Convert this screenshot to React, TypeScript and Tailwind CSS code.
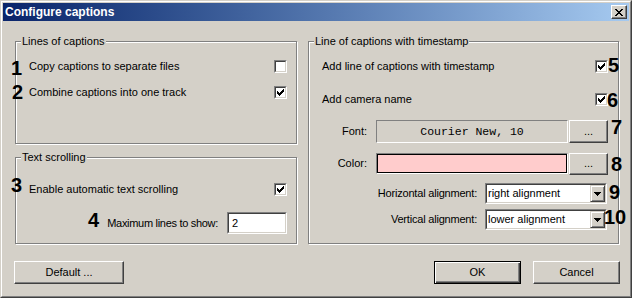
import React from "react";

function CheckMark() {
  return (
    <svg width="7" height="7" viewBox="0 0 7 7" shapeRendering="crispEdges">
      <rect x="6" y="0" width="1" height="1" fill="#000" />
      <rect x="5" y="1" width="2" height="1" fill="#000" />
      <rect x="0" y="2" width="1" height="1" fill="#000" />
      <rect x="4" y="2" width="3" height="1" fill="#000" />
      <rect x="0" y="3" width="2" height="1" fill="#000" />
      <rect x="3" y="3" width="3" height="1" fill="#000" />
      <rect x="0" y="4" width="5" height="1" fill="#000" />
      <rect x="1" y="5" width="3" height="1" fill="#000" />
      <rect x="2" y="6" width="1" height="1" fill="#000" />
    </svg>
  );
}

function Check({ checked }: { checked?: boolean }) {
  return (
    <div className="w-[13px] h-[13px] shrink-0 border border-t-[#808080] border-l-[#808080] border-r-white border-b-white">
      <div className="w-full h-full border border-t-[#404040] border-l-[#404040] border-r-[#D4D0C8] border-b-[#D4D0C8] bg-white flex items-center justify-center">
        {checked && <CheckMark />}
      </div>
    </div>
  );
}

function Group({
  title,
  className,
  children,
}: {
  title: string;
  className: string;
  children?: React.ReactNode;
}) {
  return (
    <div className={className}>
      <span className="absolute -top-[7px] left-[5px] px-[1px] bg-[#D4D0C8] leading-[13px] whitespace-nowrap">
        {title}
      </span>
      {children}
    </div>
  );
}

function Arrow() {
  return (
    <svg width="7" height="4" viewBox="0 0 7 4" shapeRendering="crispEdges">
      <rect x="0" y="0" width="7" height="1" fill="#000" />
      <rect x="1" y="1" width="5" height="1" fill="#000" />
      <rect x="2" y="2" width="3" height="1" fill="#000" />
      <rect x="3" y="3" width="1" height="1" fill="#000" />
    </svg>
  );
}

function Select({ value }: { value: string }) {
  return (
    <div className="w-[122px] h-[21px] mr-[1px] border border-t-[#808080] border-l-[#808080] border-r-white border-b-white">
      <div className="w-full h-full flex border border-t-[#404040] border-l-[#404040] border-r-[#D4D0C8] border-b-[#D4D0C8] bg-white">
        <div className="flex-1 flex items-center pl-[1px] whitespace-nowrap">{value}</div>
        <div className="w-[15px] h-full flex items-center justify-center bg-[#D4D0C8] border border-t-[#D4D0C8] border-l-[#D4D0C8] border-r-[#404040] border-b-[#404040] shadow-[inset_1px_1px_0_#fff,inset_-1px_-1px_0_#808080]">
          <Arrow />
        </div>
      </div>
    </div>
  );
}

function Num({ n, className }: { n: string; className: string }) {
  return (
    <span
      className={
        "absolute font-['Liberation_Sans',Arial,sans-serif] font-bold text-[20px] leading-[20px] text-black " +
        className
      }
    >
      {n}
    </span>
  );
}

export default function App() {
  return (
    <div className="relative w-[632px] h-[298px] font-['Liberation_Sans',Arial,sans-serif] text-[11px] text-black select-none">
      <div className="w-full h-full border border-t-[#D4D0C8] border-l-[#D4D0C8] border-r-[#404040] border-b-[#404040] bg-[#D4D0C8]">
        <div className="w-full h-full border border-t-white border-l-white border-r-[#808080] border-b-[#808080] p-[1px] flex flex-col">
          {/* Title bar */}
          <div className="h-[18px] flex items-center justify-between bg-linear-to-r from-[#0A246A] to-[#A6CAF0] pl-[2px] pr-[2px]">
            <span className="text-white font-bold text-[12px] leading-[18px]">Configure captions</span>
            <div className="w-[16px] h-[14px] bg-[#D4D0C8] flex items-center justify-center border border-t-white border-l-white border-r-[#404040] border-b-[#404040] shadow-[inset_-1px_-1px_0_#808080]">
              <svg width="8" height="7" viewBox="0 0 8 7" shapeRendering="crispEdges">
                <rect x="0" y="0" width="2" height="1" fill="#000" />
                <rect x="6" y="0" width="2" height="1" fill="#000" />
                <rect x="1" y="1" width="2" height="1" fill="#000" />
                <rect x="5" y="1" width="2" height="1" fill="#000" />
                <rect x="2" y="2" width="4" height="1" fill="#000" />
                <rect x="3" y="3" width="2" height="1" fill="#000" />
                <rect x="2" y="4" width="4" height="1" fill="#000" />
                <rect x="1" y="5" width="2" height="1" fill="#000" />
                <rect x="5" y="5" width="2" height="1" fill="#000" />
                <rect x="0" y="6" width="2" height="1" fill="#000" />
                <rect x="6" y="6" width="2" height="1" fill="#000" />
              </svg>
            </div>
          </div>

          {/* Groups */}
          <div className="flex mt-[20px] ml-[12px]">
            <div className="flex flex-col w-[282px] gap-[13px]">
              <Group
                title="Lines of captions"
                className="relative h-[103px] border border-[#808080] shadow-[1px_1px_0_#fff,inset_1px_1px_0_#fff] pt-[18px] pl-[13px] pr-[9px] flex flex-col gap-[13px]"
              >
                <div className="h-[13px] flex items-center justify-between">
                  <span>Copy captions to separate files</span>
                  <Check />
                </div>
                <div className="h-[13px] flex items-center justify-between">
                  <span>Combine captions into one track</span>
                  <Check checked />
                </div>
              </Group>
              <Group
                title="Text scrolling"
                className="relative h-[87px] border border-[#808080] shadow-[1px_1px_0_#fff,inset_1px_1px_0_#fff] pt-[25px] pl-[13px] pr-[9px] flex flex-col"
              >
                <div className="h-[13px] flex items-center justify-between">
                  <span>Enable automatic text scrolling</span>
                  <Check checked />
                </div>
                <div className="mt-[16px] h-[22px] flex items-center justify-end">
                  <span className="tracking-[-0.3px]">Maximum lines to show:</span>
                  <div className="ml-[9px] w-[60px] h-[22px] border border-t-[#808080] border-l-[#808080] border-r-white border-b-white">
                    <div className="w-full h-full border border-t-[#404040] border-l-[#404040] border-r-[#D4D0C8] border-b-[#D4D0C8] bg-white flex items-center pl-[3px]">
                      2
                    </div>
                  </div>
                </div>
              </Group>
            </div>

            <Group
              title="Line of captions with timestamp"
              className="relative ml-[11px] w-[311px] h-[203px] border border-[#808080] shadow-[1px_1px_0_#fff,inset_1px_1px_0_#fff] pt-[18px] pl-[13px] pr-[10px] flex flex-col"
            >
              <div className="h-[13px] flex items-center justify-between">
                <span>Add line of captions with timestamp</span>
                <Check checked />
              </div>
              <div className="mt-[20px] h-[13px] flex items-center justify-between">
                <span>Add camera name</span>
                <Check checked />
              </div>
              <div className="mt-[14px] h-[23px] flex items-center justify-end">
                <span>Font:</span>
                <div className="ml-[9px] w-[192px] h-[23px] border border-t-[#808080] border-l-[#808080] border-r-white border-b-white flex items-center justify-center font-['Liberation_Mono','Courier_New',monospace] text-[11.5px]">
                  Courier New, 10
                </div>
                <div className="ml-[1px] w-[39px] h-[23px] flex items-center justify-center border border-t-white border-l-white border-r-[#404040] border-b-[#404040] shadow-[inset_-1px_-1px_0_#808080]">
                  ...
                </div>
              </div>
              <div className="mt-[10px] h-[21px] flex items-center justify-end">
                <span>Color:</span>
                <div className="ml-[9px] w-[192px] h-[21px] border border-t-[#808080] border-l-[#808080] border-r-white border-b-white">
                  <div className="w-full h-full border border-black bg-[#FFCCCC]" />
                </div>
                <div className="ml-[1px] w-[39px] h-[22px] flex items-center justify-center border border-t-white border-l-white border-r-[#404040] border-b-[#404040] shadow-[inset_-1px_-1px_0_#808080]">
                  ...
                </div>
              </div>
              <div className="mt-[9px] h-[21px] flex items-center justify-end">
                <span className="tracking-[-0.2px]">Horizontal alignment:</span>
                <div className="ml-[8px]">
                  <Select value="right alignment" />
                </div>
              </div>
              <div className="mt-[5px] h-[21px] flex items-center justify-end">
                <span className="tracking-[-0.2px]">Vertical alignment:</span>
                <div className="ml-[8px]">
                  <Select value="lower alignment" />
                </div>
              </div>
            </Group>
          </div>

          {/* Buttons */}
          <div className="flex mt-[17px] ml-[11px]">
            <div className="w-[110px] h-[23px] flex items-center justify-center border border-t-white border-l-white border-r-[#404040] border-b-[#404040] shadow-[inset_-1px_-1px_0_#808080]">
              Default ...
            </div>
            <div className="ml-[310px] w-[87px] h-[23px] flex items-center justify-center border border-black shadow-[inset_1px_1px_0_#fff,inset_-1px_-1px_0_#404040,inset_-2px_-2px_0_#808080]">
              OK
            </div>
            <div className="ml-[12px] w-[87px] h-[23px] flex items-center justify-center border border-t-white border-l-white border-r-[#404040] border-b-[#404040] shadow-[inset_-1px_-1px_0_#808080]">
              Cancel
            </div>
          </div>
        </div>
      </div>

      <Num n="1" className="left-[11px] top-[58px]" />
      <Num n="2" className="left-[12px] top-[82px]" />
      <Num n="3" className="left-[11px] top-[175px]" />
      <Num n="4" className="left-[88px] top-[210px]" />
      <Num n="5" className="left-[608px] top-[55px]" />
      <Num n="6" className="left-[607px] top-[90px]" />
      <Num n="7" className="left-[611px] top-[117px]" />
      <Num n="8" className="left-[611px] top-[154px]" />
      <Num n="9" className="left-[609px] top-[182px]" />
      <Num n="10" className="left-[604px] top-[207px]" />
    </div>
  );
}
